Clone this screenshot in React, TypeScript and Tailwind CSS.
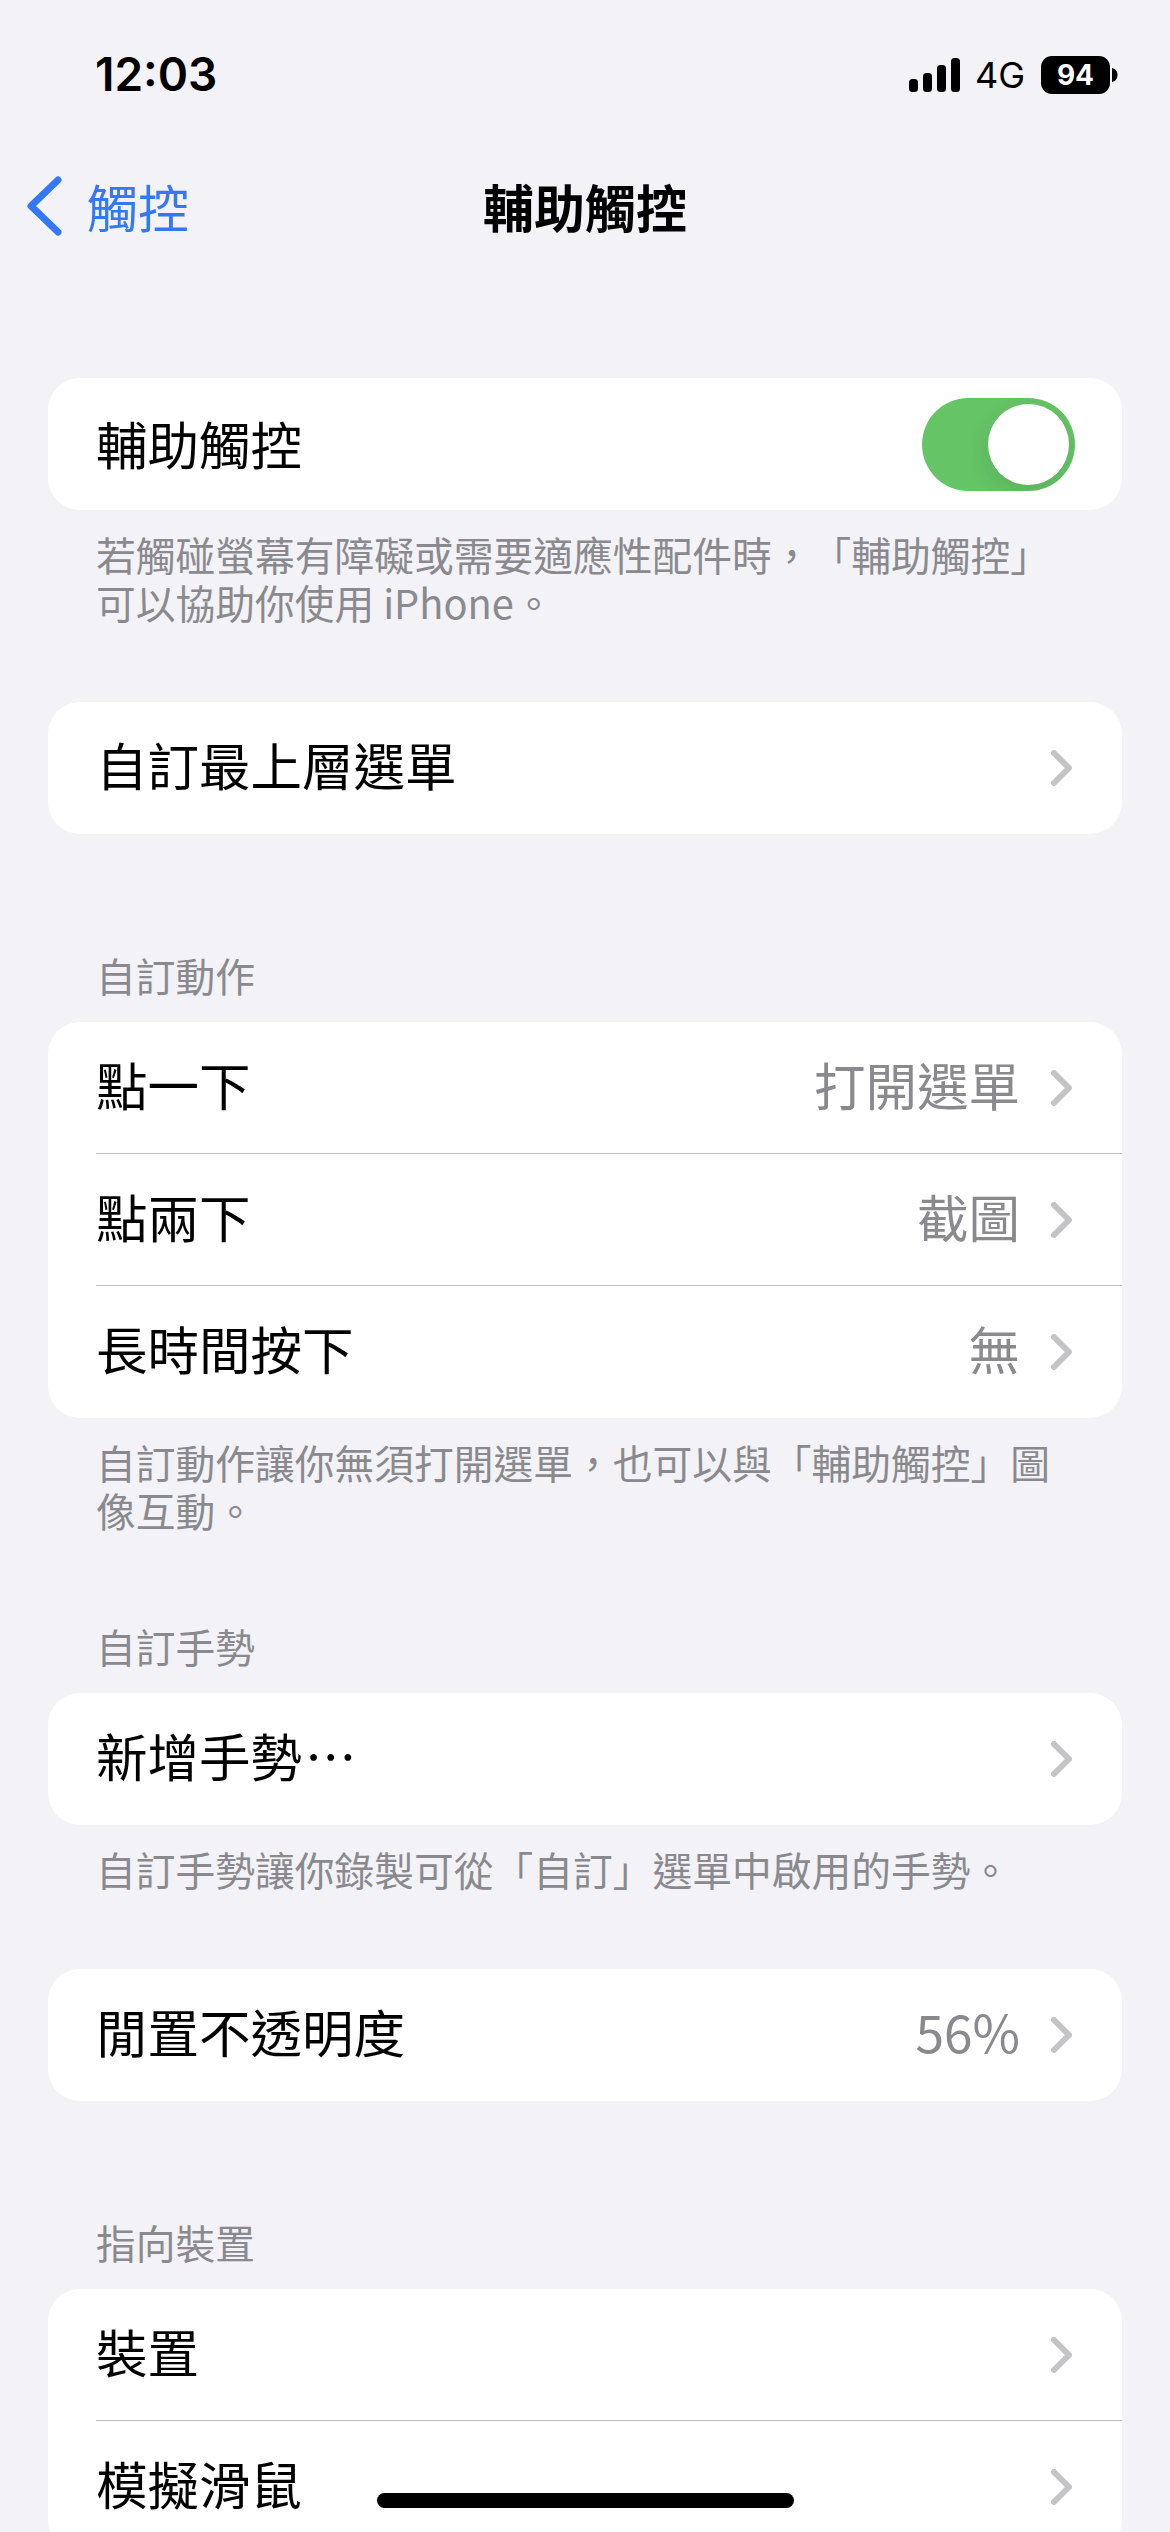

import React from "react";

const font = { fontFamily: '"Noto Sans CJK TC", "Noto Sans CJK SC", sans-serif' };

function Chevron() {
  return (
    <svg width="21" height="36" viewBox="0 0 21 36" fill="none" className="shrink-0">
      <path d="M3 3 L18 18 L3 33" stroke="#c4c4c7" strokeWidth="6" strokeLinecap="round" strokeLinejoin="round" />
    </svg>
  );
}

function Row({ label, value, last }: { label: React.ReactNode; value?: string; last?: boolean }) {
  return (
    <div className="relative flex h-[132px] items-center pl-[48px] pr-[50px]">
      <span className="mb-[8px] flex-1 text-[51.5px] leading-none text-black">{label}</span>
      {value && <span className="mb-[8px] mr-[31px] text-[51.5px] leading-none text-[#8a8a8e]">{value}</span>}
      <Chevron />
      {!last && <div className="absolute bottom-0 left-[48px] right-0 h-px bg-[#c0c0c3]" />}
    </div>
  );
}

function Card({ children }: { children: React.ReactNode }) {
  return <div className="mx-[48px] overflow-hidden rounded-[32px] bg-white">{children}</div>;
}

function Header({ children }: { children: React.ReactNode }) {
  return <div className="mb-[24px] px-[96px] text-[39.75px] leading-[46px] text-[#8a8a8e]">{children}</div>;
}

function Footer({ lines }: { lines: string[] }) {
  return (
    <div className="mt-[20px] px-[96px] text-[39.75px] leading-[48px] text-[#8a8a8e] [text-spacing-trim:space-all]">
      {lines.map((l) => (
        <div key={l} className="whitespace-nowrap">{l}</div>
      ))}
    </div>
  );
}

export default function App() {
  return (
    <div className="relative h-[2532px] w-[1170px] overflow-hidden bg-[#f2f2f7]" style={font}>
      <div className="flex h-[148px] items-start justify-between pl-[95px] pr-[52px] pt-[48px]">
        <span className="text-[46px] font-semibold leading-[53px] text-black" style={{ fontFamily: "Inter, sans-serif" }}>12:03</span>
        <div className="flex items-center pt-[7px]">
          <svg width="52" height="36" viewBox="0 0 52 36" className="mr-[14px]">
            <rect x="0" y="22" width="9" height="13" rx="3.5" fill="#000" />
            <rect x="14" y="16" width="9" height="19" rx="3.5" fill="#000" />
            <rect x="28" y="8" width="9" height="27" rx="3.5" fill="#000" />
            <rect x="42" y="1" width="9" height="34" rx="3.5" fill="#000" />
          </svg>
          <span className="mr-[16px] text-[36px] font-normal leading-[40px] text-black" style={{ fontFamily: "Inter, sans-serif" }}>4G</span>
          <div className="flex h-[38px] w-[69px] items-center justify-center rounded-[11px] bg-black text-[28px] font-bold leading-none text-white" style={{ fontFamily: "Inter, sans-serif" }}>94</div>
          <svg width="6" height="14" viewBox="0 0 6 14" className="ml-[2px]">
            <path d="M0 0 C4 1 5.5 4 5.5 7 C5.5 10 4 13 0 14 Z" fill="#000" />
          </svg>
        </div>
      </div>

      <div className="relative flex h-[116px] items-center justify-center">
        <div className="absolute left-[26px] top-0 flex h-full items-center">
          <svg width="38" height="60" viewBox="0 0 38 60" fill="none" className="mr-[23px]">
            <path d="M32 4 L5 30 L32 56" stroke="#3478f6" strokeWidth="7" strokeLinecap="round" strokeLinejoin="round" />
          </svg>
          <span className="text-[51px] leading-none text-[#3478f6]">觸控</span>
        </div>
        <span className="text-[51px] font-semibold leading-none text-black">輔助觸控</span>
      </div>

      <div className="mt-[114px]">
        <Card>
          <div className="flex h-[132px] items-center justify-between pl-[48px] pr-[47px]">
            <span className="mb-[3px] text-[51.5px] leading-none text-black">輔助觸控</span>
            <div className="flex h-[93px] w-[153px] items-center justify-end overflow-hidden rounded-full bg-[#65c466] pr-[6px]">
              <div className="h-[81px] w-[81px] rounded-full bg-white shadow-[0_8px_24px_rgba(0,0,0,0.1)]" />
            </div>
          </div>
        </Card>
        <Footer lines={["若觸碰螢幕有障礙或需要適應性配件時，「輔助觸控」", "可以協助你使用 iPhone。"]} />
      </div>

      <div className="mt-[76px]">
        <Card>
          <Row label="自訂最上層選單" last />
        </Card>
      </div>

      <div className="mt-[118px]">
        <Header>自訂動作</Header>
        <Card>
          <Row label="點一下" value="打開選單" />
          <Row label="點兩下" value="截圖" />
          <Row label="長時間按下" value="無" last />
        </Card>
        <Footer lines={["自訂動作讓你無須打開選單，也可以與「輔助觸控」圖", "像互動。"]} />
      </div>

      <div className="mt-[89px]">
        <Header>自訂手勢</Header>
        <Card>
          <Row label={<>新增手勢<span className="ml-[3px]">⋯</span></>} last />
        </Card>
        <Footer lines={["自訂手勢讓你錄製可從「自訂」選單中啟用的手勢。"]} />
      </div>

      <div className="mt-[76px]">
        <Card>
          <Row label="閒置不透明度" value="56%" last />
        </Card>
      </div>

      <div className="mt-[118px]">
        <Header>指向裝置</Header>
        <Card>
          <Row label="裝置" />
          <Row label="模擬滑鼠" />
        </Card>
      </div>

      <div className="absolute bottom-[24px] left-[377px] h-[15px] w-[417px] rounded-full bg-black" />
    </div>
  );
}
